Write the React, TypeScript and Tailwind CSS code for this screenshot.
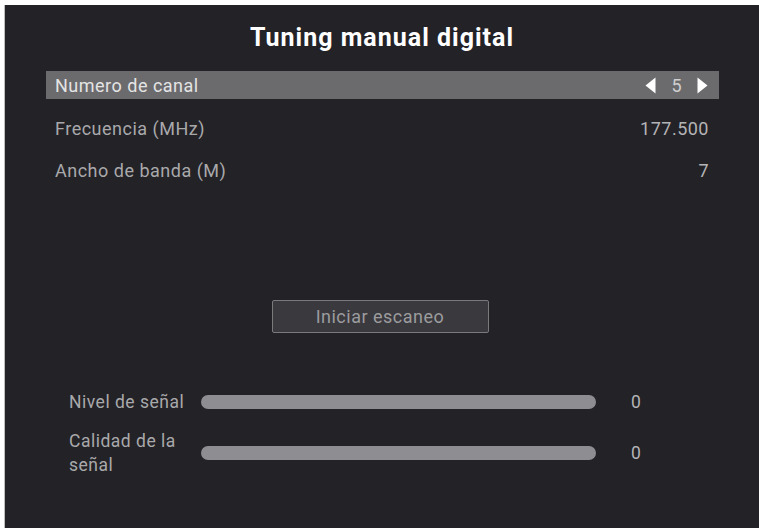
const rows = [
  { label: "Frecuencia (MHz)", value: "177.500" },
  { label: "Ancho de banda (M)", value: "7" },
];

const meters = [
  { label: "Nivel de señal", value: 0 },
  { label: "Calidad de la señal", value: 0 },
];

function Arrow({ dir }: { dir: "left" | "right" }) {
  return (
    <svg width="11" height="17" viewBox="0 0 11 17" className="fill-white">
      {dir === "left" ? (
        <path d="M10.5 0.5 L0.5 8.5 L10.5 16.5 Z" />
      ) : (
        <path d="M0.5 0.5 L10.5 8.5 L0.5 16.5 Z" />
      )}
    </svg>
  );
}

export default function App() {
  return (
    <div className="h-[528px] w-[759px] bg-white pl-[4px] pt-[5px] font-['Roboto',sans-serif]">
      <div className="flex h-full w-full flex-col border-l border-[#bdbdbd] bg-[#232227]">
        <h1 className="pt-[18px] text-center text-[25px] font-bold leading-[30px] tracking-[1px] text-white">
          Tuning manual digital
        </h1>

        <div className="ml-[41px] mr-[40px] mt-[18px] flex h-[28px] items-center justify-between bg-[#6b6b6e] pl-[9px] pr-[11px] text-[18px] tracking-[0.5px] text-[#e4e4e4]">
          <span>Numero de canal</span>
          <div className="flex items-center gap-[15px]">
            <Arrow dir="left" />
            <span className="text-[#cfcfcf]">5</span>
            <Arrow dir="right" />
          </div>
        </div>

        <div className="ml-[50px] mr-[50px] mt-[17px] flex flex-col gap-[18px]">
          {rows.map((r) => (
            <div
              key={r.label}
              className="flex h-[24px] items-center justify-between text-[18px] tracking-[0.5px] text-[#a9a9ab]"
            >
              <span>{r.label}</span>
              <span className="text-[#b4b4b6]">{r.value}</span>
            </div>
          ))}
        </div>

        <div className="mt-[118px] flex justify-center pr-[4px]">
          <button className="h-[33px] w-[217px] rounded-[2px] border-[1.5px] border-[#7a7a7c] bg-[#3a393e] text-[18px] tracking-[0.5px] text-[#9c9c9e]">
            Iniciar escaneo
          </button>
        </div>

        <div className="ml-[64px] mt-[57px] flex flex-col gap-[15px]">
          {meters.map((m) => (
            <div key={m.label} className="flex items-center">
              <span className="w-[124px] text-[17.5px] leading-[24px] tracking-[0.5px] text-[#a9a9ab]">
                {m.label}
              </span>
              <div className="ml-[8px] h-[14px] w-[395px] rounded-full bg-[#8e8d92]" />
              <span className="ml-[35px] text-[17.5px] leading-[24px] text-[#b4b4b6]">
                {m.value}
              </span>
            </div>
          ))}
        </div>
      </div>
    </div>
  );
}
